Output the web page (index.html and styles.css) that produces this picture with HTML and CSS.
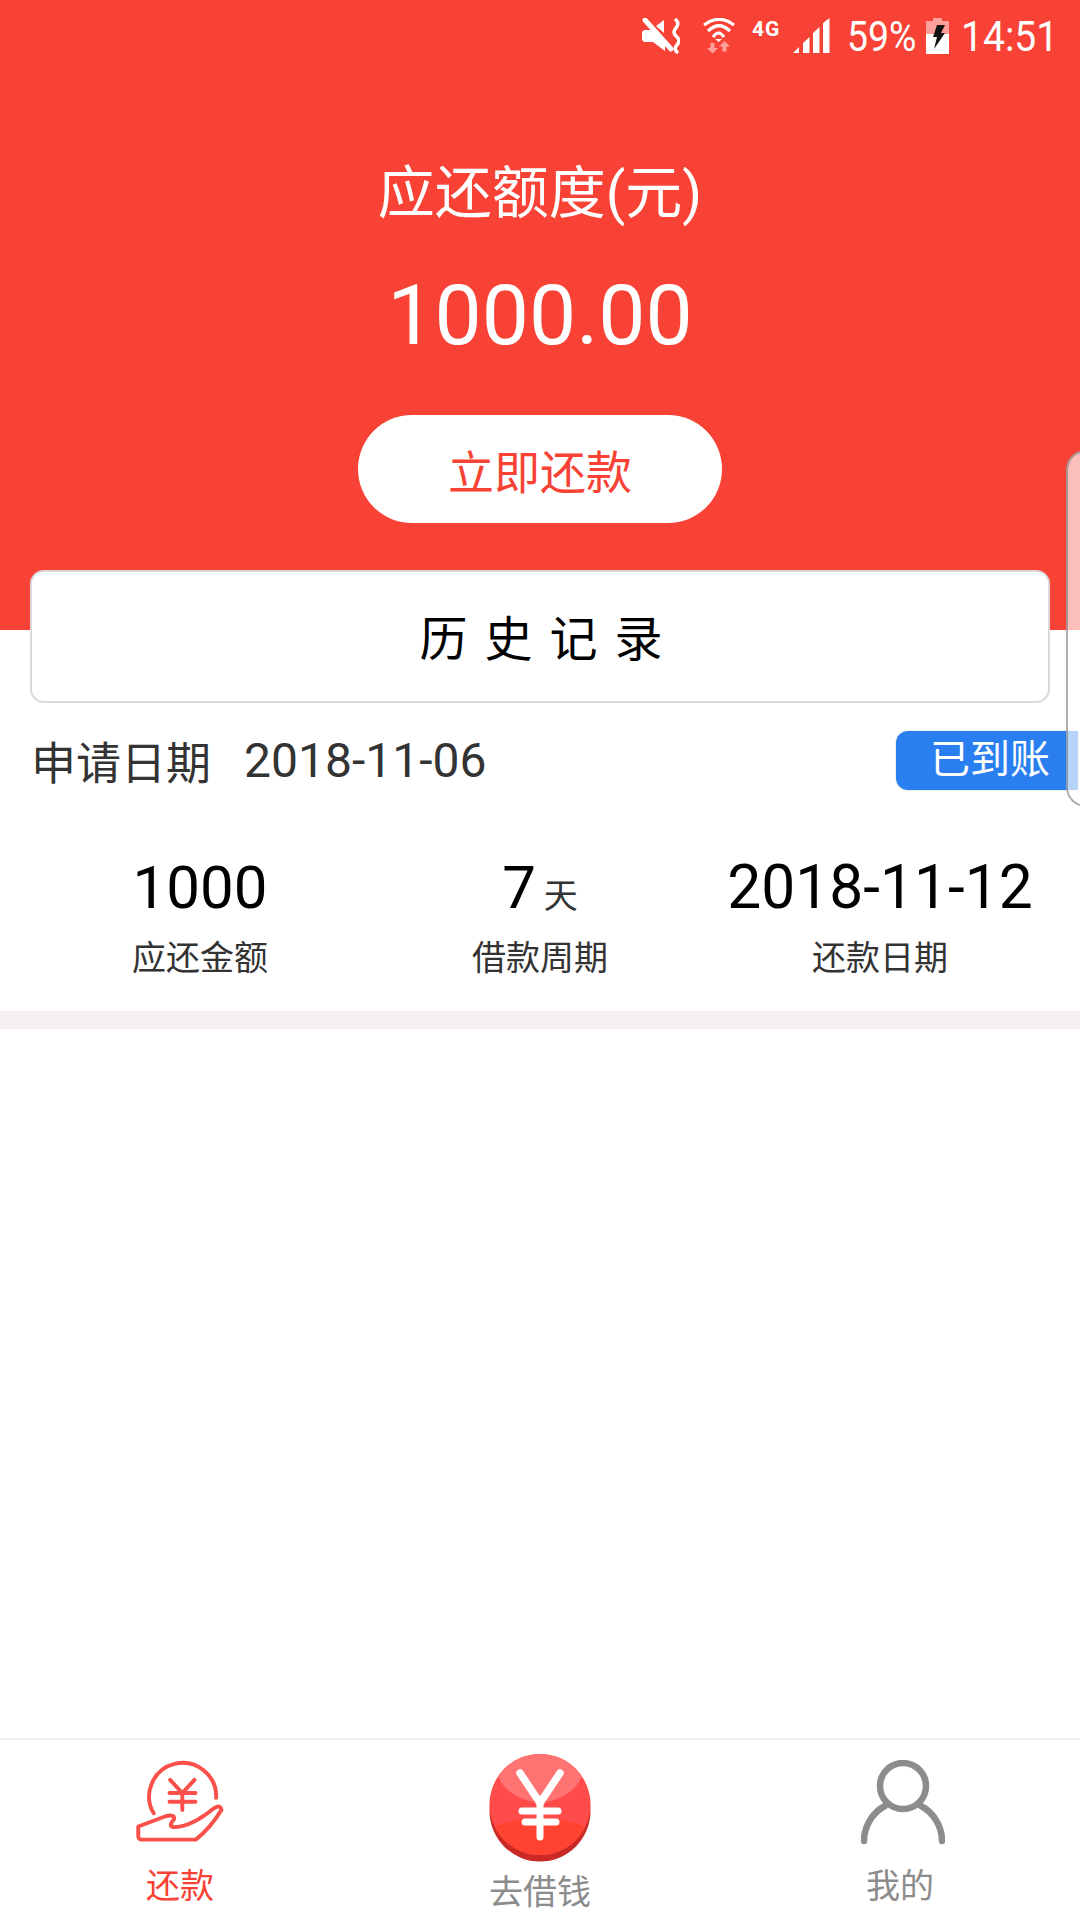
FILE: index.html
```html
<!DOCTYPE html>
<html lang="zh-CN">

<head>
    <meta charset="UTF-8">
    <meta name="viewport" content="width=device-width, initial-scale=1.0">
    <title>还款</title>
    <link rel="stylesheet" href="styles.css">
</head>

<body>
    <div class="page">
        <!-- 顶部红色区域 -->
        <header class="hero">
            <div class="status-bar">
                <svg class="ic-mute" viewBox="0 0 38 36">
                    <path d="M0 14l2-2h8l13 15v6L11 24H2l-2-2zM14 8l8-6v13z" fill="#fff"/>
                    <path d="M3 2l26 29" stroke="#fff" stroke-width="5" stroke-linecap="round"/>
                    <path d="M33 1q5 4 1 9-4 4 0 8 5 4 1 9-4 4 1 8" fill="none" stroke="#fff" stroke-width="3.5"/>
                </svg>
                <svg class="ic-wifi" viewBox="0 0 32 36">
                    <path d="M1 7Q16-4.500 31 7M5 13Q16 2.500 27 13M10 19Q15.500 11 21 19" fill="none" stroke="#fff" stroke-width="3.2"/>
                    <path d="M12 21h7l-3.300 3z" fill="#fff"/>
                    <path d="M7.500 25h4v5H15l-5.500 5.500L4 30h3.500zM21.500 23l5.500 5.500h-3.500v5h-4v-5H16z" fill="#ffa19a"/>
                </svg>
                <span class="net">4G</span>
                <svg class="ic-signal" viewBox="0 0 37 36">
                    <path d="M0 35l6-6v6zM10 35V25l6.500-6v16zM20 35V15l6.500-6v26zM30 35V5l6.500-5v35z" fill="#fff"/>
                </svg>
                <span class="pct"><span>59%</span></span>
                <svg class="ic-battery" viewBox="0 0 23 36">
                    <path d="M7 0h9v3h7v13H0V3h7z" fill="#ffa19a"/>
                    <path d="M0 16h23v20H0z" fill="#fff"/>
                    <path d="M11 7h8l-4 8h4L8 31l3-12H7z" fill="#111"/>
                </svg>
                <span class="time"><span>14:51</span></span>
            </div>
            <p class="hero-title">应还额度(元)</p>
            <p class="hero-amount">1000.00</p>
            <button class="pay-btn">立即还款</button>
        </header>

        <div class="history-card">历史记录</div>

        <div class="apply-row">
            <div class="apply-date"><span class="apply-label">申请日期</span><span class="apply-value">2018-11-06</span></div>
            <span class="badge">已到账</span>
        </div>

        <div class="stats">
            <div class="stat">
                <div class="stat-value">1000</div>
                <div class="stat-label">应还金额</div>
            </div>
            <div class="stat">
                <div class="stat-value">7<small>天</small></div>
                <div class="stat-label">借款周期</div>
            </div>
            <div class="stat">
                <div class="stat-value stat-date">2018-11-12</div>
                <div class="stat-label">还款日期</div>
            </div>
        </div>

        <div class="divider"></div>
        <div class="spacer"></div>

        <!-- 底部导航 -->
        <nav class="tabbar">
            <div class="tab tab-active">
                <svg class="tab-icon" width="92" height="85" viewBox="100 60 280 258">
                    <g fill="none" stroke="#fb5049" stroke-width="12" stroke-linecap="round" stroke-linejoin="round">
                        <path d="M350 175A102 102 0 1 0 160 222"/>
                        <path d="M210 120l37 40 37-40M208 160h79M208 187h79M247 160v52"/>
                        <path d="M113 262l85-32q26-6 24 10-22 24 4 24 50-2 118-58 20-12 22 6-34 56-78 90H125q-13 0-12-12z"/>
                    </g>
                </svg>
                <span class="tab-text">还款</span>
            </div>
            <div class="tab tab-mid">
                <svg class="coin" width="102" height="108" viewBox="0 0 102 108">
                    <defs>
                        <clipPath id="coin-face">
                            <circle cx="51" cy="50.500" r="50.500"/>
                        </clipPath>
                    </defs>
                    <circle cx="51" cy="57" r="50.500" fill="#c92a26"/>
                    <circle cx="51" cy="50.500" r="50.500" fill="#ff4c4a"/>
                    <g clip-path="url(#coin-face)">
                        <ellipse cx="51" cy="8" rx="45" ry="40" fill="#ff7372"/>
                        <ellipse cx="51" cy="112" rx="78" ry="48" fill="#ff4330"/>
                    </g>
                    <g fill="none" stroke="#fff" stroke-linecap="round">
                        <path d="M31 19l20 30 20-30" stroke-width="7.500"/>
                        <path d="M33 57h36M36 68h31M51 50v33" stroke-width="7"/>
                    </g>
                </svg>
                <span class="tab-text">去借钱</span>
            </div>
            <div class="tab tab-user">
                <svg class="tab-icon" width="84" height="85" viewBox="0 0 84 85">
                    <g fill="none" stroke="#8c8c8c" stroke-width="6.500" stroke-linecap="round">
                        <circle cx="42" cy="26" r="23"/>
                        <path d="M3 81C3 66 12 52 24 46M81 81C81 66 72 52 60 46"/>
                    </g>
                </svg>
                <span class="tab-text">我的</span>
            </div>
        </nav>

        <!-- 右侧半透明浮层 -->
        <div class="side-panel"></div>
    </div>
</body>

</html>
```

FILE: styles.css
```css
* {
    box-sizing: border-box;
}

body {
    margin: 0;
    background-color: #fff;
    font-family: Roboto, "Noto Sans CJK SC", sans-serif;
}

p {
    margin: 0;
}

.page {
    position: relative;
    width: 1080px;
    height: 1920px;
    overflow: hidden;
    display: flex;
    flex-direction: column;
}

/* 顶部红色区域 */
.hero {
    height: 630px;
    flex: none;
    background-color: #f74235;
    color: #fff;
    display: flex;
    flex-direction: column;
    align-items: center;
}

.status-bar {
    width: 100%;
    height: 75px;
    padding: 18px 29px 0 0;
    display: flex;
    justify-content: flex-end;
    align-items: flex-start;
}

.ic-mute {
    width: 38px;
    height: 36px;
    margin-right: 23px;
}

.ic-wifi {
    width: 32px;
    height: 36px;
    margin-right: 17px;
}

.net {
    width: 28px;
    margin-top: 1px;
    margin-right: 13px;
    font-size: 21px;
    font-weight: 700;
    line-height: 20px;
    letter-spacing: 1px;
}

.ic-signal {
    width: 37px;
    height: 36px;
    margin-right: 17px;
}

.pct,
.time {
    font-size: 42px;
    line-height: 38px;
    white-space: nowrap;
}

.pct span,
.time span {
    display: inline-block;
    transform-origin: left center;
}

.pct {
    width: 68px;
    margin-right: 11px;
}

.pct span {
    transform: scaleX(0.89);
}

.time {
    width: 90px;
}

.time span {
    transform: scaleX(0.93);
}

.ic-battery {
    width: 23px;
    height: 36px;
    margin-right: 12px;
}

.hero-title {
    margin-top: 86px;
    font-size: 57px;
    line-height: 66px;
}

.hero-amount {
    margin-top: 39px;
    font-size: 84px;
    line-height: 100px;
}

.pay-btn {
    margin-top: 49px;
    width: 364px;
    height: 108px;
    border: none;
    border-radius: 54px;
    background-color: #fff;
    color: #f74235;
    font-family: inherit;
    font-size: 46px;
}

/* 历史记录卡片 */
.history-card {
    flex: none;
    height: 133px;
    margin: -60px 30px 0;
    position: relative;
    border: 2px solid #d9d9d9;
    border-radius: 14px;
    background-color: #fff;
    color: #000;
    font-size: 48px;
    letter-spacing: 17px;
    padding: 0 0 4px 19px;
    display: flex;
    justify-content: center;
    align-items: center;
}

.apply-row {
    flex: none;
    height: 60px;
    margin: 27px 0 1px;
    padding: 0 2px 0 31px;
    display: flex;
    justify-content: space-between;
    align-items: center;
}

.apply-date {
    color: #333;
    display: flex;
    align-items: center;
}

.apply-label {
    font-size: 45px;
    margin-right: 33px;
}

.apply-value {
    font-size: 48px;
}

.badge {
    width: 182px;
    height: 59px;
    padding-left: 34px;
    border-radius: 12px 0 0 12px;
    background-color: #2a7ff0;
    box-shadow: 0 0 0 1px #eee;
    color: #fff;
    font-size: 40px;
    line-height: 57px;
}

/* 三列数据 */
.stats {
    flex: none;
    height: 220px;
    padding: 0 30px;
    display: grid;
    grid-template-columns: repeat(3, 1fr);
    text-align: center;
}

.stat-value {
    margin-top: 61px;
    height: 72px;
    font-size: 60px;
    line-height: 72px;
    color: #000;
}

.stat-date {
    font-size: 60.500px;
}

.stat-value small {
    margin-left: 8px;
    font-size: 34px;
    color: #333;
}

.stat-label {
    margin-top: 12px;
    font-size: 34px;
    line-height: 44px;
    color: #333;
}

.divider {
    flex: none;
    height: 18px;
    background-color: #f5f1f2;
}

.spacer {
    flex: 1;
}

/* 底部导航 */
.tabbar {
    flex: none;
    height: 182px;
    border-top: 2px solid #f2f2f2;
    display: grid;
    grid-template-columns: repeat(3, 1fr);
    background-color: #fff;
}

.tab {
    display: flex;
    flex-direction: column;
    align-items: center;
    color: #8c8c8c;
}

.tab-icon {
    margin-top: 20px;
}

.tab-text {
    margin-top: 19px;
    font-size: 34px;
    line-height: 44px;
}

.tab-active {
    color: #f74235;
}

.tab-mid .coin {
    margin-top: 14px;
}

.tab-mid .tab-text {
    margin-top: 8px;
}

.tab-user .tab-icon {
    margin-left: 5px;
}

/* 右侧半透明浮层 */
.side-panel {
    position: absolute;
    left: 1066px;
    top: 450px;
    width: 40px;
    height: 357px;
    border: 2px solid rgba(120, 120, 120, 0.6);
    border-radius: 30px;
    background-color: rgba(255, 255, 255, 0.66);
}
```
